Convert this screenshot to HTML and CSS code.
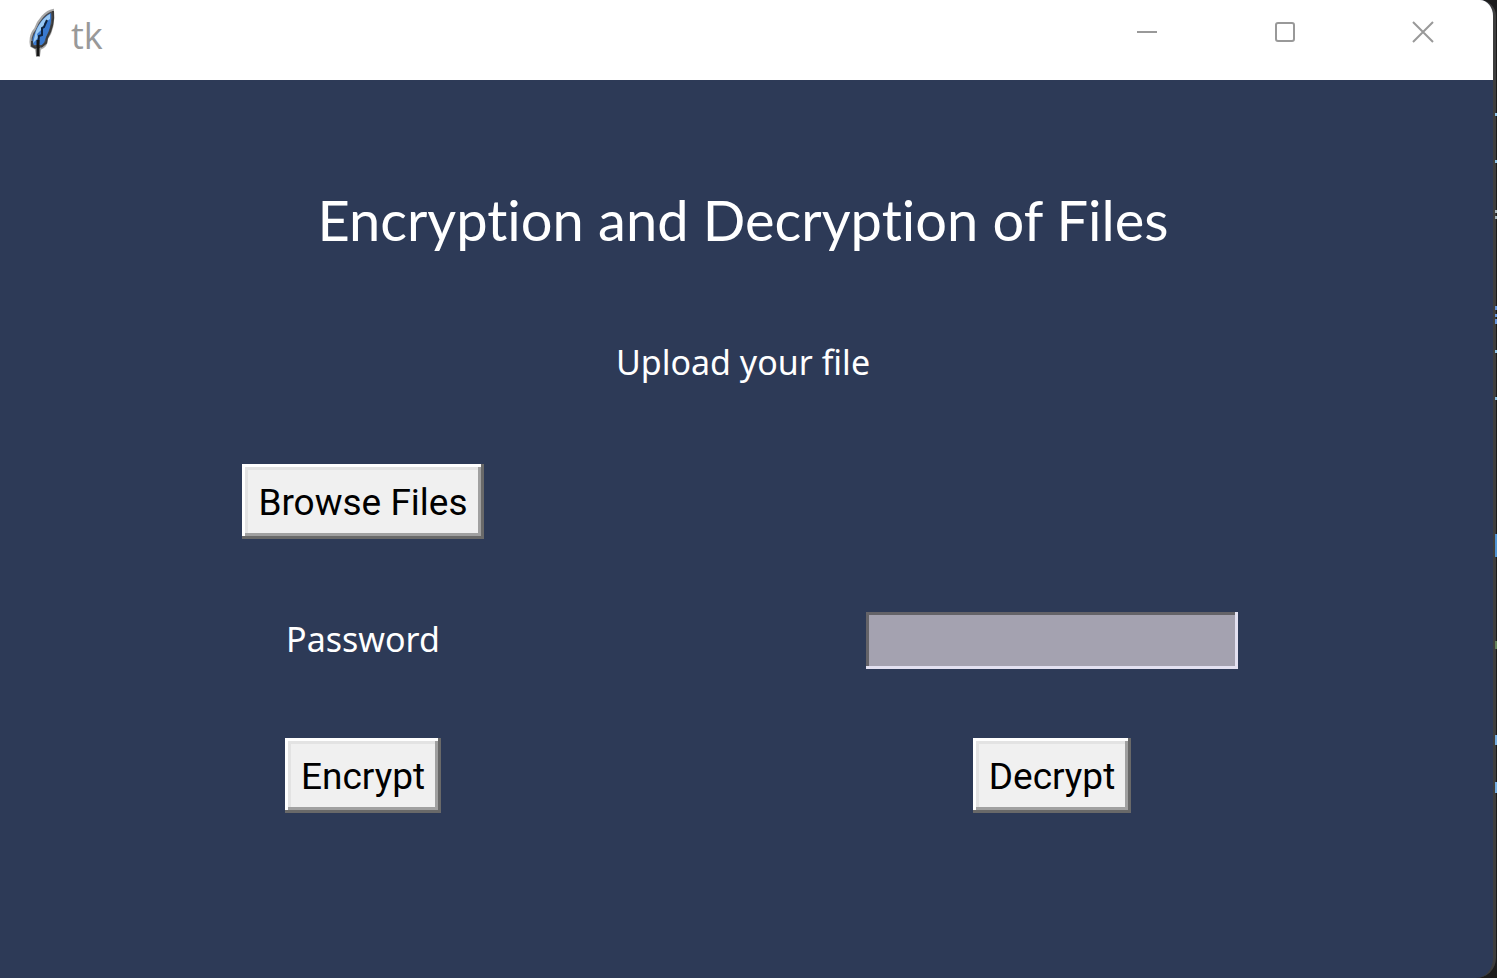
FILE: index.html
```html
<!DOCTYPE html>
<html lang="en">
<head>
<meta charset="utf-8">
<title>tk</title>
<link rel="stylesheet" href="styles.css">
</head>
<body>
<div class="window">
  <header class="titlebar">
    <svg class="feather" width="32" height="52" viewBox="0 0 32 52" aria-hidden="true">
      <path d="M27 3 C20 4 12 13 9 22 C4 27 4 35 5 39 L10 42 L11 49 L13 49 L14 42 C20 40 21 35 21 32 C26 25 28 14 27 3Z" fill="#4a4c52" stroke="#a8a8a8" stroke-width="2"/>
      <path d="M25 6 C18 9 11 19 9 26 C6 31 6 35 8 38 L16 38 C19 35 19 33 20 30 C24 23 26 14 25 6Z" fill="#3979cf"/>
      <path d="M24 7 C16 11 10 22 9 28 L7 36 L12 31 L11 27 L18 20 L18 16 L24 12Z" fill="#9bcaf5"/>
      <path d="M21 13 L18 20 L16 21 L16 28 L13 29 L12 38" fill="none" stroke="#10233f" stroke-width="2"/>
      <path d="M27 4 C28 14 25 24 21 31 L20 36 L15 40 M6 34 L6 39 L10 41" fill="none" stroke="#3a3a3a" stroke-width="2"/>
      <path d="M12 33 L12 49" fill="none" stroke="#151515" stroke-width="3"/>
    </svg>
    <h1 class="caption">tk</h1>
    <div class="controls">
      <button class="control" type="button" aria-label="Minimize"><svg width="22" height="22" viewBox="0 0 22 22"><path d="M1 11H21"/></svg></button>
      <button class="control" type="button" aria-label="Maximize"><svg width="22" height="22" viewBox="0 0 22 22"><rect x="2" y="2" width="18" height="18" rx="2"/></svg></button>
      <button class="control" type="button" aria-label="Close"><svg width="22" height="22" viewBox="0 0 22 22"><path d="M1 1L21 21M21 1L1 21"/></svg></button>
    </div>
  </header>
  <main class="form">
    <h2 class="title">Encryption and Decryption of Files</h2>
    <p class="hint">Upload your file</p>
    <button class="push browse" type="button">Browse Files</button>
    <label class="label" for="password">Password</label>
    <input class="entry" id="password" type="password">
    <button class="push" type="button">Encrypt</button>
    <button class="push" type="button">Decrypt</button>
  </main>
</div>
<svg class="behind" width="2" height="978" viewBox="0 0 2 978" aria-hidden="true">
  <path d="M0 114.500H2M0 161.500H2M0 351.500H2M0 398.500H2" stroke="#8fc6ea" stroke-width="3"/>
  <path d="M1 210V213M1 216V219" stroke="#a9b7bd" stroke-width="2"/>
  <path d="M1 306V310M1 314V317M1 319V324" stroke="#6797df" stroke-width="2"/>
  <path d="M1 534V557" stroke="#4f94d5" stroke-width="2"/>
  <path d="M1 641V649" stroke="#64825a" stroke-width="2"/>
  <path d="M1 735V745M1 782V793" stroke="#75afe3" stroke-width="2"/>
</svg>
</body>
</html>
```
FILE: styles.css
```css
* { box-sizing: border-box; }

body {
  margin: 0;
  min-height: 100vh;
  display: flex;
  background: #1c1c1c;
  overflow: hidden;
  font-variant-ligatures: none;
}

.window {
  flex: 1;
  min-width: 0;
  display: flex;
  flex-direction: column;
  border-right: 3px solid #3e3e3e;
  border-radius: 0 16px 20px 0;
  margin-right: -1px;
  overflow: hidden;
  background: #2d3a57;
}

.behind { flex: none; }

.titlebar {
  height: 80px;
  display: flex;
  align-items: flex-start;
  background: #fff;
}

.feather { margin: 7px 13px 0 26px; }

.caption {
  margin: 12px 0 0;
  font: 400 36px/48px "Open Sans", sans-serif;
  color: #999;
}

.controls { display: flex; margin: 0 1px 0 auto; }

.control {
  width: 138px;
  height: 64px;
  padding: 0;
  border: 0;
  background: none;
  display: grid;
  place-items: center;
}

.control svg { fill: none; stroke: #999; stroke-width: 2; }

.form {
  flex: 1;
  padding: 104px 61px 0 54px;
  display: grid;
  grid-template-columns: 618fr 760fr;
  justify-items: center;
  align-content: start;
  align-items: center;
}

.title,
.hint {
  grid-column: 1 / -1;
  margin: 0;
  color: #fff;
  font-variant-ligatures: none;
}

.title { font: 400 56px/72px Lato, sans-serif; font-variant-ligatures: none; }

.hint,
.label {
  font: 400 34px/48px "Noto Sans", sans-serif;
  font-variant-ligatures: none;
  color: #fff;
}

.hint { margin-top: 82px; }

.push {
  margin-top: 69px;
  padding: 15px 16px 12px;
  border: 0;
  box-shadow:
    inset -3px -3px #696969,
    inset 3px 3px #fff,
    inset -6px -6px #a0a0a0,
    inset 6px 6px #e3e3e3;
  background: #f0f0f0;
  color: #000;
  font: 400 37px/48px Roboto, sans-serif;
}

.browse { grid-column: 1; margin-top: 78px; }

.label { grid-column: 1; margin-top: 70px; }

.entry {
  width: 372px;
  height: 57px;
  margin-top: 73px;
  padding: 0 8px;
  border: 0;
  border-radius: 0;
  box-shadow: inset -3px -3px #e3e1f1, inset 3px 3px #646368;
  background: #a4a2b0;
  font: 400 34px/48px "Noto Sans", sans-serif;
}
```
